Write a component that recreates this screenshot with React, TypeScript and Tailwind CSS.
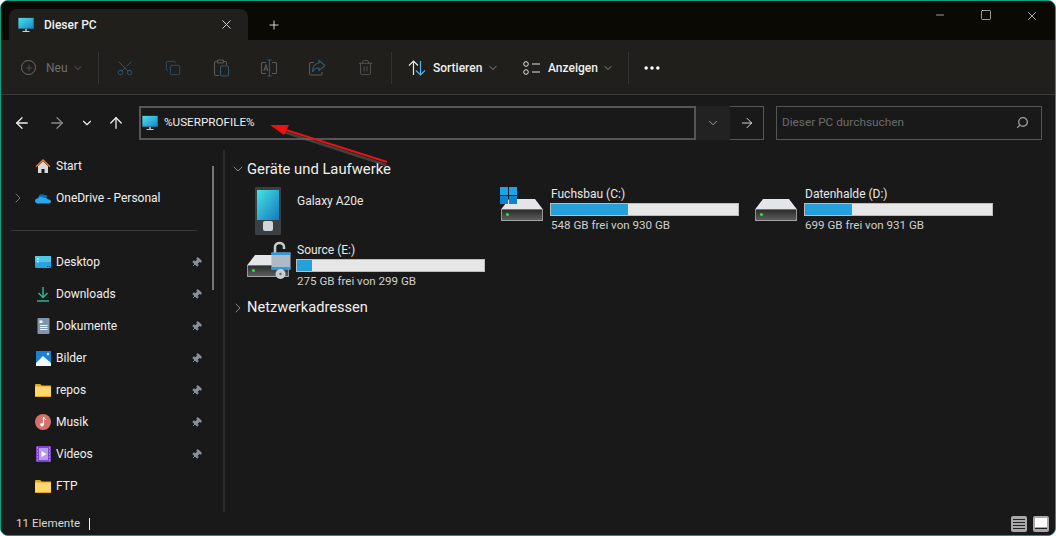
import { ArrowLeft, ArrowRight, ArrowUp, ChevronDown, ChevronRight, Copy, Minus, MoreHorizontal, Pin, Plus, Scissors, Search, Square, Trash2, X } from 'lucide-react';
import type { ReactNode } from 'react';

function MonitorIcon({ className }: { className?: string }) {
  return (
    <svg viewBox="0 0 16 16" className={className}>
      <defs>
        <linearGradient id="screen" x1="0" y1="0" x2="1" y2="1">
          <stop offset="0" stopColor="#4fe0ea" />
          <stop offset="1" stopColor="#1487c9" />
        </linearGradient>
      </defs>
      <rect x="0" y="0.5" width="16" height="11.5" fill="#2a4450" />
      <rect x="0.5" y="1" width="15" height="10.5" fill="url(#screen)" />
      <rect x="7" y="12" width="2" height="2" fill="#8fa3ad" />
      <rect x="4.5" y="14" width="7" height="1" fill="#c8d2d8" />
    </svg>
  );
}

function FolderIcon() {
  return (
    <svg viewBox="0 0 16 13" className="h-[13px] w-4">
      <path d="M0 1.2C0 .5.5 0 1.2 0h4l1.5 1.5H16V3H0Z" fill="#e7a90f" />
      <path d="M0 2.6h15c.6 0 1 .4 1 1v8.2c0 .6-.4 1-1 1H1c-.6 0-1-.4-1-1Z" fill="#fcd86f" />
      <path d="M0 12h16v.2c0 .4-.4.8-1 .8H1c-.6 0-1-.4-1-.8Z" fill="#e7a90f" />
    </svg>
  );
}

function HomeIcon() {
  return (
    <svg viewBox="0 0 16 16" className="h-4 w-4">
      <path d="M3 8 8 3.5 13 8v7H9.5v-4h-3v4H3Z" fill="#d9d9d9" />
      <path d="M0.5 8.2 8 1l7.5 7.2-1 1L8 3.2 1.5 9.2Z" fill="#e8762a" />
    </svg>
  );
}

function CloudIcon() {
  return (
    <svg viewBox="0 0 16 11" className="h-[11px] w-4">
      <path d="M3 5c.4-3 3.6-4.6 6-3 1.4-.5 3 .3 3.400 2L5 8Z" fill="#0f6cbd" />
      <path d="M3.400 10.500C1.500 10.500 0 9.400 0 7.900 0 6.400 1.500 5.300 3.200 5.300 4.500 3.800 7 3.500 8.600 5c2-.9 3.600.3 4 1.200 1.900 0 3.400.9 3.400 2.300 0 1.200-1 2-2.300 2Z" fill="#28a8ea" />
    </svg>
  );
}

function DesktopIcon() {
  return (
    <svg viewBox="0 0 16 12" className="h-3 w-4">
      <rect width="16" height="12" rx="1" fill="#28a3dc" />
      <rect x="0" y="0" width="16" height="6" fill="#4cc8ec" />
      <rect x="2" y="2" width="1.500" height="1.500" fill="#fff" />
      <rect x="2" y="5" width="1.500" height="1.500" fill="#fff" />
      <rect x="12" y="10" width="1" height="1" fill="#16354a" />
      <rect x="14" y="10" width="1" height="1" fill="#16354a" />
    </svg>
  );
}

function DownloadIcon() {
  return (
    <svg viewBox="0 0 16 16" className="h-4 w-4" fill="none" stroke="#2bb594" strokeWidth="1.500">
      <path d="M8 1v10M3.500 7 8 11.500 12.500 7" />
      <path d="M2 15h12" />
    </svg>
  );
}

function DocumentIcon() {
  return (
    <svg viewBox="0 0 13 16" className="h-4 w-[13px]">
      <rect width="12" height="16" x="0.500" rx="1" fill="#8096ad" />
      <path d="M3 7.500h7.500M3 9.500h7.500M3 11.500h7.500" stroke="#f2f5f8" strokeWidth="1" />
      <rect x="2.500" y="2.500" width="3" height="2.500" fill="#f2f5f8" />
    </svg>
  );
}

function PicturesIcon() {
  return (
    <svg viewBox="0 0 15 15" className="h-[15px] w-[15px]">
      <rect width="15" height="15" fill="#1b80cf" />
      <path d="M0 12 7 5l8 7v3H0Z" fill="#f2f8fd" />
      <circle cx="12" cy="3" r="1.200" fill="#e6f3fc" />
    </svg>
  );
}

function MusicIcon() {
  return (
    <svg viewBox="0 0 16 16" className="h-4 w-4">
      <circle cx="8" cy="8" r="8" fill="#d2726a" />
      <path d="M8.500 3v7.500" stroke="#fff" strokeWidth="1.200" />
      <path d="M8.500 3c.5 1.500 2 1.700 2.500 3" stroke="#fff" fill="none" />
      <circle cx="7" cy="10.800" r="1.800" fill="#fff" />
    </svg>
  );
}

function VideoIcon() {
  return (
    <svg viewBox="0 0 15 16" className="h-4 w-[15px]">
      <rect width="15" height="16" rx="1" fill="#7e45c9" />
      <rect x="3" y="2" width="9" height="12" fill="#b79be8" />
      <path d="M5.500 5v6l5-3Z" fill="#fff" />
      <path d="M1 2h1M1 5h1M1 8h1M1 11h1M1 14h1M13 2h1M13 5h1M13 8h1M13 11h1M13 14h1" stroke="#d9c9f5" strokeWidth="1.200" />
    </svg>
  );
}

function DriveIcon({ className }: { className?: string }) {
  return (
    <svg viewBox="0 0 42 22" className={className}>
      <defs>
        <linearGradient id="drivebody" x1="0" y1="0" x2="0" y2="1">
          <stop offset="0" stopColor="#2a2a2a" />
          <stop offset="1" stopColor="#5e5e5e" />
        </linearGradient>
      </defs>
      <path d="M8 0h26l8 10.500H0Z" fill="#e3e5e8" />
      <rect x="0" y="10" width="42" height="12" rx="1" fill="#b9b9b9" />
      <rect x="0.700" y="10.500" width="40.600" height="10.800" rx="1" fill="url(#drivebody)" />
      <circle cx="6.500" cy="15.500" r="1.500" fill="#2ee04a" />
    </svg>
  );
}

function WindowsLogo() {
  return (
    <svg viewBox="0 0 17 17" className="h-[17px] w-[17px]">
      <rect x="0" y="0" width="8" height="8" fill="#1aa6e6" />
      <rect x="9" y="0" width="8" height="8" fill="#1aa6e6" />
      <rect x="0" y="9" width="8" height="8" fill="#0f83cf" />
      <rect x="9" y="9" width="8" height="8" fill="#0f83cf" />
    </svg>
  );
}

function LockIcon() {
  return (
    <svg viewBox="0 0 20 40" className="h-10 w-5">
      <path d="M4 15V6c0-5.500 9-5.500 9 0v2" fill="none" stroke="#c3cdd6" strokeWidth="2.500" />
      <rect x="0.500" y="11.500" width="19" height="17" fill="#aebac6" />
      <rect x="0.500" y="11.500" width="19" height="2.500" fill="#2f9ae0" />
      <rect x="0.500" y="26" width="19" height="2.500" fill="#2f9ae0" />
      <circle cx="9.500" cy="33" r="5" fill="#c9ced3" />
      <circle cx="9.500" cy="33" r="1.200" fill="#666" />
    </svg>
  );
}

function PhoneIcon() {
  return (
    <svg viewBox="0 0 26 48" className="h-12 w-[26px]">
      <defs>
        <linearGradient id="phone" x1="0" y1="0" x2="1" y2="1">
          <stop offset="0" stopColor="#45e3e6" />
          <stop offset="1" stopColor="#1479bb" />
        </linearGradient>
      </defs>
      <rect width="26" height="48" rx="1" fill="#3a3f44" />
      <rect x="2" y="3" width="22" height="30" fill="url(#phone)" />
      <rect x="8" y="34" width="10" height="10" rx="2" fill="#d2d5d8" />
    </svg>
  );
}

function PasteIcon() {
  return (
    <svg viewBox="0 0 18 18" className="h-[18px] w-[18px]" fill="none" strokeWidth="1.100">
      <path d="M6 2.500H4a1.500 1.500 0 0 0-1.500 1.500v11A1.500 1.500 0 0 0 4 16.500h3M12 2.500h1A1.500 1.500 0 0 1 14.500 4v2" stroke="#5a5a5a" />
      <rect x="5.500" y="1" width="6" height="3" rx="1" stroke="#5a5a5a" />
      <rect x="8.500" y="7" width="8" height="10" rx="1.500" stroke="#2f5a73" />
    </svg>
  );
}

function RenameIcon() {
  return (
    <svg viewBox="0 0 18 18" className="h-[18px] w-[18px]" fill="none" strokeWidth="1.100">
      <path d="M6 3.500H2.500a1 1 0 0 0-1 1v9a1 1 0 0 0 1 1H6M12 3.500h3.500a1 1 0 0 1 1 1v9a1 1 0 0 1-1 1H12" stroke="#5a5a5a" />
      <path d="M9.500 1v16M7.500 1h4M7.500 17h4" stroke="#2f5a73" />
      <path d="M3.800 12 6 6l2 6M4.500 10.200h3" stroke="#5a5a5a" />
    </svg>
  );
}

function ShareIcon() {
  return (
    <svg viewBox="0 0 18 18" className="h-[18px] w-[18px]" fill="none" strokeWidth="1.100">
      <path d="M6 3.500H3a1.500 1.500 0 0 0-1.500 1.500v9.500A1.500 1.500 0 0 0 3 16h9.500a1.500 1.500 0 0 0 1.500-1.500V13" stroke="#5a5a5a" />
      <path d="M11 1.500 17 6.500 11 11.500V9C8 9 6 10 4.500 13 4.500 8 7 4.500 11 4Z" stroke="#2f5a73" />
    </svg>
  );
}

function SortIcon() {
  return (
    <svg viewBox="0 0 18 16" className="h-4 w-[18px]" fill="none" strokeWidth="1.200">
      <path d="M5.500 15V1M1 5.500 5.500 1 10 5.500" stroke="#e8e8e8" />
      <path d="M12.500 1v14M8 10.500l4.500 4.500 4.500-4.500" stroke="#4cb4ee" />
    </svg>
  );
}

function ViewIcon() {
  return (
    <svg viewBox="0 0 18 14" className="h-[14px] w-[18px]" fill="none" stroke="#e0e0e0" strokeWidth="1">
      <circle cx="3" cy="3" r="2.300" />
      <circle cx="3" cy="11" r="2.300" />
      <path d="M9 3h8M9 11h8" />
    </svg>
  );
}

function ToolButton({ children }: { children: ReactNode }) {
  return <div className="flex w-12 items-center justify-center">{children}</div>;
}

const pinned = [
  { label: 'Desktop', icon: <DesktopIcon />, pin: true },
  { label: 'Downloads', icon: <DownloadIcon />, pin: true },
  { label: 'Dokumente', icon: <DocumentIcon />, pin: true },
  { label: 'Bilder', icon: <PicturesIcon />, pin: true },
  { label: 'repos', icon: <FolderIcon />, pin: true },
  { label: 'Musik', icon: <MusicIcon />, pin: true },
  { label: 'Videos', icon: <VideoIcon />, pin: true },
  { label: 'FTP', icon: <FolderIcon />, pin: false },
  { label: '', icon: <FolderIcon />, pin: false },
];

function NavRow({ label, icon, pin, expand }: { label: string; icon: ReactNode; pin?: boolean; expand?: boolean }) {
  return (
    <div className="flex h-8 shrink-0 items-center">
      <div className="flex w-[34px] justify-center">
        {expand && <ChevronRight className="h-4 w-4 text-[#777]" strokeWidth={1.5} />}
      </div>
      <div className="flex w-4 justify-center">{icon}</div>
      <span className="ml-[5px] flex-1 text-[12px] text-[#f0f0f0]">{label}</span>
      {pin && <Pin className="mr-[21px] h-[11px] w-[11px] rotate-45 fill-[#8a929a] text-[#8a929a]" />}
    </div>
  );
}

function DriveTile({ icon, name, free, percent }: { icon: ReactNode; name: string; free: string; percent: number }) {
  return (
    <div className="flex h-14 w-[254px] items-center">
      <div className="relative h-14 w-[50px] shrink-0">{icon}</div>
      <div className="w-[188px] text-[12px] text-[#e8e8e8]">
        <div className="leading-[16px]">{name}</div>
        <div className="my-[1px] -ml-px h-[13px] border border-[#bcbcbc] bg-[#e6e6e6]">
          <div className="h-full bg-[#26a0da]" style={{ width: `${percent}%` }} />
        </div>
        <div className="text-[11.6px] leading-[16px] text-[#cfcfcf]">{free}</div>
      </div>
    </div>
  );
}

function DeviceTile() {
  return (
    <div className="flex h-14 w-[254px] items-center">
      <div className="w-[50px] shrink-0 pl-[8px] pt-[4px]">
        <PhoneIcon />
      </div>
      <span className="pb-4 text-[12px] text-[#e8e8e8]">Galaxy A20e</span>
    </div>
  );
}

export default function App() {
  return (
    <div className="relative flex h-[536px] w-[1056px] flex-col overflow-hidden rounded-[8px] border border-[#0e9f83] bg-[#191919] text-white [font-family:Roboto,sans-serif]">
      <div className="flex h-[39px] shrink-0 items-end bg-[#0b0903] pl-2">
        <div className="flex h-[31px] w-[239px] items-center rounded-t-[8px] bg-[#201f1c] pl-[9px] pr-[14px]">
          <MonitorIcon className="h-4 w-4" />
          <span className="ml-[10px] flex-1 text-[12px] font-medium text-[#f0f0f0]">Dieser PC</span>
          <X className="h-[15px] w-[15px] text-[#ddd]" strokeWidth={1.5} />
        </div>
        <div className="ml-[19px] flex h-[31px] items-center">
          <Plus className="h-[14px] w-[14px] text-[#eee]" strokeWidth={1.5} />
        </div>
        <div className="ml-auto flex h-[39px] items-start pt-2 text-[#eee]">
          <div className="flex w-[46px] justify-center"><Minus className="h-3 w-3" strokeWidth={1.3} /></div>
          <div className="flex w-[46px] justify-center"><Square className="h-3 w-3" strokeWidth={1.3} /></div>
          <div className="flex w-[46px] justify-center"><X className="h-[14px] w-[14px]" strokeWidth={1.2} /></div>
        </div>
      </div>

      <div className="flex h-[55px] shrink-0 items-center border-b border-[#3b3b3b] bg-[#201f1c] pl-[20px] pt-px">
        <div className="flex w-[77px] items-center text-[#6f6f6f]">
          <div className="flex h-[15px] w-[15px] items-center justify-center rounded-full border border-[#6f6f6f]">
            <Plus className="h-[10px] w-[10px]" strokeWidth={1.3} />
          </div>
          <span className="ml-[10px] w-[23px] text-[12px]">Neu</span>
          <ChevronDown className="ml-[3px] h-3 w-3" strokeWidth={1.5} />
        </div>
        <div className="h-8 w-px bg-[#333]" />
        <div className="ml-[2px] flex">
          <ToolButton><Scissors className="h-[18px] w-[18px] -rotate-90 text-[#2f5a73]" strokeWidth={1.2} /></ToolButton>
          <ToolButton><Copy className="h-4 w-4 text-[#2f5a73]" strokeWidth={1.2} /></ToolButton>
          <ToolButton><PasteIcon /></ToolButton>
          <ToolButton><RenameIcon /></ToolButton>
          <ToolButton><ShareIcon /></ToolButton>
          <ToolButton><Trash2 className="h-[17px] w-[17px] text-[#5a5a5a]" strokeWidth={1.2} /></ToolButton>
        </div>
        <div className="ml-[2px] h-8 w-px bg-[#333]" />
        <div className="ml-4 flex items-center">
          <SortIcon />
          <span className="ml-[7px] w-[50px] text-[12px] font-medium text-[#f0f0f0]">Sortieren</span>
          <ChevronDown className="ml-[4px] h-3 w-3 text-[#aaa]" strokeWidth={1.5} />
        </div>
        <div className="ml-[24px] flex items-center">
          <ViewIcon />
          <span className="ml-[7px] w-[50px] text-[12px] font-medium text-[#f0f0f0]">Anzeigen</span>
          <ChevronDown className="ml-[4px] h-3 w-3 text-[#aaa]" strokeWidth={1.5} />
        </div>
        <div className="ml-[14px] h-8 w-px bg-[#333]" />
        <MoreHorizontal className="ml-[13px] h-5 w-5" strokeWidth={2.2} />
      </div>

      <div className="flex h-[55px] shrink-0 items-center">
        <div className="flex w-[138px] items-center">
          <ArrowLeft className="ml-[12px] h-[18px] w-[18px] text-[#eee]" strokeWidth={1.7} />
          <ArrowRight className="ml-[17px] h-[18px] w-[18px] text-[#8a8a8a]" strokeWidth={1.7} />
          <ChevronDown className="ml-[14px] h-[14px] w-[14px] text-[#eee]" strokeWidth={2} />
          <ArrowUp className="ml-[13px] h-[18px] w-[18px] text-[#eee]" strokeWidth={1.7} />
        </div>
        <div className="flex h-[34px] w-[625px] items-stretch">
          <div className="flex flex-1 items-center border-2 border-[#555] pl-[1px]">
            <MonitorIcon className="h-4 w-4" />
            <span className="ml-[6px] text-[11.7px] text-[#f0f0f0]">%USERPROFILE%</span>
          </div>
          <div className="flex w-[34px] items-center justify-center bg-[#222]">
            <ChevronDown className="h-[14px] w-[14px] text-[#aaa]" strokeWidth={1.5} />
          </div>
          <div className="flex w-[34px] items-center justify-center border border-l-0 border-[#555]">
            <ArrowRight className="h-4 w-4 text-[#eee]" strokeWidth={1.3} />
          </div>
        </div>
        <div className="ml-3 flex h-[34px] w-[266px] items-center border border-[#555] pl-[5px] pr-3">
          <span className="flex-1 text-[11.8px] text-[#6b6b6b]">Dieser PC durchsuchen</span>
          <Search className="h-[13px] w-[13px] -scale-x-100 text-[#9a9a9a]" strokeWidth={2.6} />
        </div>
      </div>

      <div className="flex min-h-0 flex-1">
        <div className="relative flex w-[224px] shrink-0 flex-col overflow-hidden border-r-2 border-[#2a2a2a]">
          <NavRow label="Start" icon={<HomeIcon />} />
          <NavRow label="OneDrive - Personal" icon={<CloudIcon />} expand />
          <div className="flex h-8 shrink-0 items-center pl-[10px]">
            <div className="h-px w-[186px] bg-[#3a3a3a]" />
          </div>
          {pinned.map((row, i) => (
            <NavRow key={i} label={row.label} icon={row.icon} pin={row.pin} />
          ))}
          <div className="absolute right-[9px] top-[16px] h-[124px] w-[2px] bg-[#777]" />
        </div>

        <div className="min-w-0 flex-1 pl-[5px]">
          <div className="flex h-8 items-center pt-[6px] text-[#f0f0f0]">
            <ChevronDown className="h-4 w-4 text-[#999]" strokeWidth={1.3} />
            <span className="ml-[1px] text-[14.8px]">Geräte und Laufwerke</span>
          </div>
          <div className="-mt-px flex flex-wrap pl-[17px] pr-[30px]">
            <DeviceTile />
            <DriveTile
              icon={<><DriveIcon className="absolute bottom-[16px] left-0 h-[22px] w-[42px]" /><div className="absolute -left-px top-[6px]"><WindowsLogo /></div></>}
              name="Fuchsbau (C:)"
              free="548 GB frei von 930 GB"
              percent={41}
            />
            <DriveTile
              icon={<DriveIcon className="absolute bottom-[16px] left-0 h-[22px] w-[42px]" />}
              name="Datenhalde (D:)"
              free="699 GB frei von 931 GB"
              percent={25}
            />
            <DriveTile
              icon={<><DriveIcon className="absolute bottom-[16px] left-0 h-[22px] w-[42px]" /><div className="absolute left-[24px] top-[4px]"><LockIcon /></div></>}
              name="Source (E:)"
              free="275 GB frei von 299 GB"
              percent={8}
            />
          </div>
          <div className="flex h-[30px] items-center text-[#f0f0f0]">
            <ChevronRight className="h-4 w-4 text-[#999]" strokeWidth={1.3} />
            <span className="ml-[1px] text-[14.6px]">Netzwerkadressen</span>
          </div>
        </div>
      </div>

      <div className="flex h-[23px] shrink-0 items-center bg-[#191919] pl-[15px] pr-[6px]">
        <span className="text-[11.6px] text-[#d8d8d8]">11 Elemente</span>
        <div className="ml-[9px] h-[12px] w-px bg-[#eee]" />
        <div className="ml-auto flex gap-[6px]">
          <div className="flex h-4 w-4 flex-col justify-center gap-[2px] rounded-[2px] bg-[#a8a8a8] px-[2px]">
            <div className="h-px bg-[#222]" />
            <div className="h-px bg-[#222]" />
            <div className="h-px bg-[#222]" />
            <div className="h-px bg-[#222]" />
          </div>
          <div className="flex h-4 w-4 flex-col rounded-[2px] bg-[#a8a8a8] p-[2px]">
            <div className="h-[9px] bg-white" />
            <div className="mt-[1px] h-px bg-[#222]" />
          </div>
        </div>
      </div>

      <svg className="pointer-events-none absolute left-[268px] top-[122px] h-[46px] w-[122px]" viewBox="0 0 122 46">
        <path d="M15 9 117 42" stroke="#6a6a6a" strokeWidth="2.500" opacity="0.5" />
        <path d="M17 7 118 39" stroke="#ee1111" strokeWidth="2" />
        <path d="M1 2 20 2 15 12Z" fill="#ee1111" />
      </svg>
    </div>
  );
}
